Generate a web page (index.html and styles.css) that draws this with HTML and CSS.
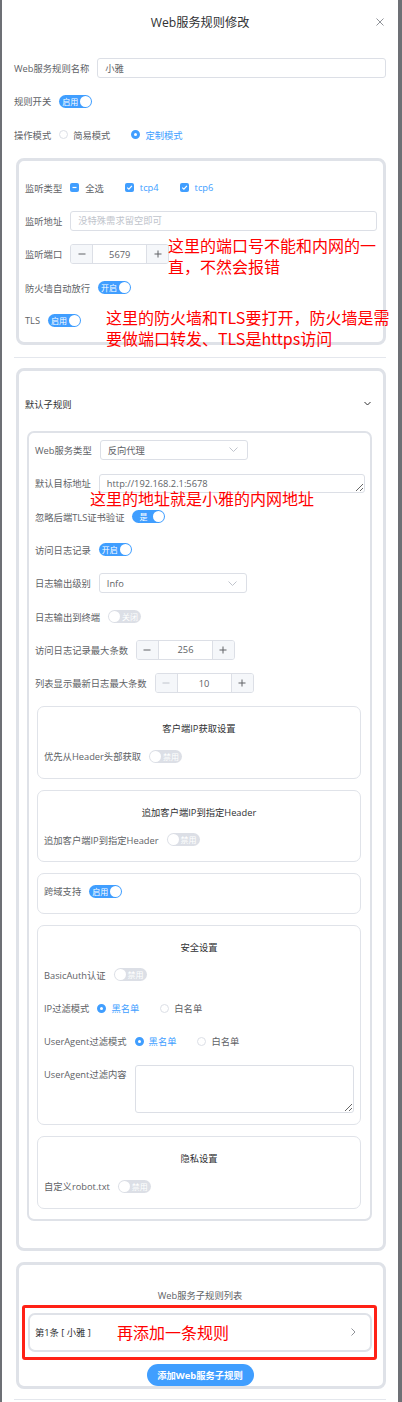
FILE: index.html
```html
<!DOCTYPE html>
<html lang="zh-CN">
<head>
    <meta charset="UTF-8">
    <meta name="viewport" content="width=device-width, initial-scale=1.0">
    <title>Web服务规则修改</title>
    <link rel="stylesheet" href="styles.css">
</head>
<body>
<div class="dialog">
    <div class="dialog-header">
        <span></span>
        <span class="dialog-title">Web服务规则修改</span>
        <svg class="close" width="8" height="8" viewBox="0 0 8 8"><path d="M0.5 0.5L7.5 7.5M7.5 0.5L0.5 7.5"/></svg>
    </div>

    <div class="dialog-body">
        <div class="form">
            <div class="row">
                <label class="label">Web服务规则名称</label>
                <input class="input grow" value="小雅">
            </div>
            <div class="row">
                <label class="label">规则开关</label>
                <span class="switch on"><span class="switch-text">启用</span><span class="knob"></span></span>
            </div>
            <div class="row">
                <label class="label">操作模式</label>
                <span class="radio"><span class="radio-dot"></span>简易模式</span>
                <span class="radio checked"><span class="radio-dot"></span>定制模式</span>
            </div>
        </div>

        <!-- 监听设置 -->
        <div class="box box-listen">
            <div class="form">
                <div class="row">
                    <label class="label">监听类型</label>
                    <span class="checkbox"><span class="check-box"><svg width="7" height="7" viewBox="0 0 7 7"><path d="M1.5 3.5H5.5"/></svg></span>全选</span>
                    <span class="checkbox checked"><span class="check-box"><svg width="7" height="7" viewBox="0 0 7 7"><path d="M1.2 3.6L2.9 5.2L5.9 1.8"/></svg></span>tcp4</span>
                    <span class="checkbox checked"><span class="check-box"><svg width="7" height="7" viewBox="0 0 7 7"><path d="M1.2 3.6L2.9 5.2L5.9 1.8"/></svg></span>tcp6</span>
                </div>
                <div class="row">
                    <label class="label">监听地址</label>
                    <input class="input grow" placeholder="没特殊需求留空即可">
                </div>
                <div class="row">
                    <label class="label">监听端口</label>
                    <div class="number">
                        <span class="number-btn minus"><svg width="8" height="8" viewBox="0 0 8 8"><path d="M0.5 4H7.5"/></svg></span>
                        <input class="number-value" value="5679">
                        <span class="number-btn plus"><svg width="8" height="8" viewBox="0 0 8 8"><path d="M0.5 4H7.5M4 0.5V7.5"/></svg></span>
                    </div>
                </div>
                <div class="row">
                    <label class="label">防火墙自动放行</label>
                    <span class="switch on"><span class="switch-text">开启</span><span class="knob"></span></span>
                </div>
                <div class="row">
                    <label class="label">TLS</label>
                    <span class="switch on"><span class="switch-text">启用</span><span class="knob"></span></span>
                </div>
            </div>
        </div>

        <div class="divider"></div>

        <!-- 默认子规则 -->
        <div class="box box-sub">
            <div class="collapse-head">
                <span>默认子规则</span>
                <svg class="chevron-down" width="7" height="5" viewBox="0 0 7 5"><path d="M0.5 1L3.5 4L6.5 1"/></svg>
            </div>
            <div class="inner-box">
                <div class="form">
                    <div class="row">
                        <label class="label">Web服务类型</label>
                        <div class="select">反向代理<svg width="9" height="5" viewBox="0 0 9 5"><path d="M0.5 0.5L4.5 4.5L8.5 0.5"/></svg></div>
                    </div>
                    <div class="row">
                        <label class="label">默认目标地址</label>
                        <textarea class="textarea grow">http://192.168.2.1:5678</textarea>
                    </div>
                    <div class="row">
                        <label class="label">忽略后端TLS证书验证</label>
                        <span class="switch on"><span class="switch-text">是</span><span class="knob"></span></span>
                    </div>
                    <div class="row">
                        <label class="label">访问日志记录</label>
                        <span class="switch on"><span class="switch-text">开启</span><span class="knob"></span></span>
                    </div>
                    <div class="row">
                        <label class="label">日志输出级别</label>
                        <div class="select">Info<svg width="9" height="5" viewBox="0 0 9 5"><path d="M0.5 0.5L4.5 4.5L8.5 0.5"/></svg></div>
                    </div>
                    <div class="row">
                        <label class="label">日志输出到终端</label>
                        <span class="switch off"><span class="knob"></span><span class="switch-text">关闭</span></span>
                    </div>
                    <div class="row">
                        <label class="label">访问日志记录最大条数</label>
                        <div class="number">
                            <span class="number-btn minus"><svg width="8" height="8" viewBox="0 0 8 8"><path d="M0.5 4H7.5"/></svg></span>
                            <input class="number-value" value="256">
                            <span class="number-btn plus"><svg width="8" height="8" viewBox="0 0 8 8"><path d="M0.5 4H7.5M4 0.5V7.5"/></svg></span>
                        </div>
                    </div>
                    <div class="row">
                        <label class="label">列表显示最新日志最大条数</label>
                        <div class="number">
                            <span class="number-btn minus disabled"><svg width="8" height="8" viewBox="0 0 8 8"><path d="M0.5 4H7.5"/></svg></span>
                            <input class="number-value" value="10">
                            <span class="number-btn plus"><svg width="8" height="8" viewBox="0 0 8 8"><path d="M0.5 4H7.5M4 0.5V7.5"/></svg></span>
                        </div>
                    </div>
                </div>

                <div class="cards">
                    <div class="card">
                        <div class="card-title">客户端IP获取设置</div>
                        <div class="row">
                            <label class="label">优先从Header头部获取</label>
                            <span class="switch off"><span class="knob"></span><span class="switch-text">禁用</span></span>
                        </div>
                    </div>
                    <div class="card">
                        <div class="card-title">追加客户端IP到指定Header</div>
                        <div class="row">
                            <label class="label">追加客户端IP到指定Header</label>
                            <span class="switch off"><span class="knob"></span><span class="switch-text">禁用</span></span>
                        </div>
                    </div>
                    <div class="card card-plain">
                        <div class="row">
                            <label class="label">跨域支持</label>
                            <span class="switch on"><span class="switch-text">启用</span><span class="knob"></span></span>
                        </div>
                    </div>
                    <div class="card">
                        <div class="card-title">安全设置</div>
                        <div class="form">
                            <div class="row">
                                <label class="label">BasicAuth认证</label>
                                <span class="switch off"><span class="knob"></span><span class="switch-text">禁用</span></span>
                            </div>
                            <div class="row">
                                <label class="label">IP过滤模式</label>
                                <span class="radio checked"><span class="radio-dot"></span>黑名单</span>
                                <span class="radio"><span class="radio-dot"></span>白名单</span>
                            </div>
                            <div class="row">
                                <label class="label">UserAgent过滤模式</label>
                                <span class="radio checked"><span class="radio-dot"></span>黑名单</span>
                                <span class="radio"><span class="radio-dot"></span>白名单</span>
                            </div>
                            <div class="row row-top">
                                <label class="label">UserAgent过滤内容</label>
                                <textarea class="textarea grow tall"></textarea>
                            </div>
                        </div>
                    </div>
                    <div class="card">
                        <div class="card-title">隐私设置</div>
                        <div class="row">
                            <label class="label">自定义robot.txt</label>
                            <span class="switch off"><span class="knob"></span><span class="switch-text">禁用</span></span>
                        </div>
                    </div>
                </div>
            </div>
        </div>

        <!-- 子规则列表 -->
        <div class="box box-list">
            <div class="list-title">Web服务子规则列表</div>
            <div class="list-item">
                <span>第1条 [ 小雅 ]</span>
                <svg class="chevron-right" width="5" height="8" viewBox="0 0 5 8"><path d="M0.5 0.5L4 4L0.5 7.5"/></svg>
                <span class="mark-box"></span>
                <span class="note note-item">再添加一条规则</span>
            </div>
            <button class="btn-add">添加Web服务子规则</button>
        </div>

        <div class="divider bottom"></div>
    </div>

    <div class="note note-port">这里的端口号不能和内网的一<br>直，不然会报错</div>
    <div class="note note-tls">这里的防火墙和TLS要打开，防火墙是需<br>要做端口转发、TLS是https访问</div>
    <div class="note note-addr">这里的地址就是小雅的内网地址</div>
</div>
</body>
</html>
```

FILE: styles.css
```css
* {
    box-sizing: border-box;
}

body {
    margin: 0;
    background: #6d7075;
    font-family: "Open Sans", "Noto Sans CJK SC", sans-serif;
    font-size: 9.3px;
    color: #606266;
}

.dialog {
    position: relative;
    width: 396px;
    min-height: 1402px;
    margin-left: 2px;
    background: #fff;
}

.dialog-header {
    display: grid;
    grid-template-columns: 1fr auto 1fr;
    align-items: center;
    height: 44px;
    padding: 0 12px;
}

.dialog-title {
    font-size: 12.2px;
    color: #303133;
}

.close {
    justify-self: end;
    margin-right: 2px;
    fill: none;
    stroke: #909399;
    stroke-width: 1;
}

.dialog-body {
    padding: 14px 12px 0 12px;
}

.form {
    display: flex;
    flex-direction: column;
    gap: 13.33px;
}

.row {
    display: flex;
    align-items: center;
    height: 20px;
}

.row-top {
    align-items: flex-start;
    height: auto;
}

.row-top .label {
    line-height: 20px;
}

.label {
    margin-right: 8px;
    white-space: nowrap;
    color: #606266;
}

.grow {
    flex: 1;
    min-width: 0;
}

.input {
    height: 20px;
    border: 1px solid #dcdfe6;
    border-radius: 3px;
    padding: 0 7px;
    font: inherit;
    color: #606266;
    outline: none;
}

.input::placeholder {
    color: #c0c4cc;
}

.textarea {
    height: 19px;
    border: 1px solid #dcdfe6;
    border-radius: 3px;
    padding: 2px 7px;
    font: inherit;
    line-height: 13px;
    color: #606266;
    resize: vertical;
    outline: none;
}

.textarea.tall {
    height: 48px;
}

/* switch */
.switch {
    display: inline-flex;
    align-items: center;
    justify-content: space-between;
    width: 33px;
    height: 13px;
    padding: 1px;
    border-radius: 7px;
    background: #409eff;
}

.switch.off {
    background: #dcdfe6;
}

.knob {
    width: 11px;
    height: 11px;
    border-radius: 50%;
    background: #fff;
}

.switch-text {
    flex: 1;
    text-align: center;
    font-size: 8px;
    line-height: 11px;
    color: #fff;
}

/* radio / checkbox */
.radio,
.checkbox {
    display: inline-flex;
    align-items: center;
    margin-right: 21px;
    color: #606266;
}

.radio.checked,
.checkbox.checked {
    color: #409eff;
}

.radio-dot {
    width: 9px;
    height: 9px;
    margin-right: 5px;
    border: 1px solid #dcdfe6;
    border-radius: 50%;
    background: #fff;
}

.radio.checked .radio-dot {
    border: 3px solid #409eff;
}

.check-box {
    display: inline-flex;
    align-items: center;
    justify-content: center;
    width: 9px;
    height: 9px;
    margin-right: 6px;
    border-radius: 2px;
    background: #409eff;
}

.check-box svg {
    fill: none;
    stroke: #fff;
    stroke-width: 1.2;
}

/* number input */
.number {
    display: flex;
    width: 99px;
    height: 20px;
    border: 1px solid #dcdfe6;
    border-radius: 3px;
    overflow: hidden;
}

.number-btn {
    display: flex;
    align-items: center;
    justify-content: center;
    width: 22px;
    background: #f5f7fa;
}

.number-btn svg {
    fill: none;
    stroke: #606266;
    stroke-width: 1;
}

.number-btn.disabled svg {
    stroke: #c0c4cc;
}

.number-btn.minus {
    border-right: 1px solid #dcdfe6;
}

.number-btn.plus {
    border-left: 1px solid #dcdfe6;
}

.number-value {
    flex: 1;
    min-width: 0;
    border: none;
    padding: 0;
    font: inherit;
    text-align: center;
    color: #606266;
    outline: none;
}

.select {
    display: flex;
    align-items: center;
    justify-content: space-between;
    width: 148px;
    height: 20px;
    padding: 0 9px 0 7px;
    border: 1px solid #dcdfe6;
    border-radius: 3px;
    color: #606266;
}

.select svg {
    fill: none;
    stroke: #c0c4cc;
    stroke-width: 1;
}

/* boxes */
.box {
    margin-left: 2px;
    border: 3px solid #dfe2e8;
    border-radius: 8px;
}

.box-listen {
    margin-top: 13px;
    padding: 17px 6px 11px 6px;
}

.divider {
    height: 1px;
    margin: 12px 0 10px 0;
    background: #e4e7ed;
}

.divider.bottom {
    margin: 10px 0 0 0;
}

.collapse-head {
    display: flex;
    align-items: center;
    justify-content: space-between;
    height: 20px;
    margin-top: 23px;
    padding: 0 12px 0 6px;
    color: #303133;
}

.chevron-down {
    fill: none;
    stroke: #303133;
    stroke-width: 1;
}

.inner-box {
    margin: 17px 11px 27px 8px;
    padding: 7px 5px 10px 6px;
    border: 2px solid #dfe2e8;
    border-radius: 7px;
}

.cards {
    display: flex;
    flex-direction: column;
    gap: 11px;
    margin: 13px 4px 0 2px;
}

.card {
    display: flex;
    flex-direction: column;
    gap: 7px;
    padding: 12px 6px 11.5px 6px;
    border: 1px solid #e0e3e9;
    border-radius: 7px;
}

.card-plain {
    padding-top: 7px;
}

.card-title {
    line-height: 20px;
    text-align: center;
    color: #303133;
}

.box-list {
    margin-top: 11px;
    padding: 24px 11px 0 9px;
}

.list-title {
    line-height: 14px;
    text-align: center;
    color: #606266;
}

.list-item {
    position: relative;
    display: flex;
    align-items: center;
    justify-content: space-between;
    height: 39px;
    margin-top: 10px;
    padding: 0 14px 0 5px;
    border: 2px solid #dfe2e8;
    border-radius: 7px;
    color: #303133;
}

.chevron-right {
    fill: none;
    stroke: #909399;
    stroke-width: 1;
}

.mark-box {
    position: absolute;
    left: -8px;
    right: -7px;
    top: -10px;
    bottom: -10px;
    border: 3px solid #ff2116;
    border-radius: 3px;
}

.btn-add {
    display: block;
    width: 107px;
    height: 22px;
    margin: 12px auto 0 auto;
    border: none;
    border-radius: 11px;
    background: #409eff;
    font: inherit;
    font-weight: bold;
    color: #fff;
}

/* red notes drawn on the screenshot */
.note {
    position: absolute;
    font-family: "Noto Sans CJK SC", sans-serif;
    font-size: 16px;
    line-height: 21px;
    color: #ff0000;
    white-space: nowrap;
}

.note-port {
    left: 166px;
    top: 235px;
}

.note-tls {
    left: 104px;
    top: 307px;
}

.note-addr {
    left: 88px;
    top: 488px;
}

.note-item {
    left: 87px;
    top: 7px;
}
```
